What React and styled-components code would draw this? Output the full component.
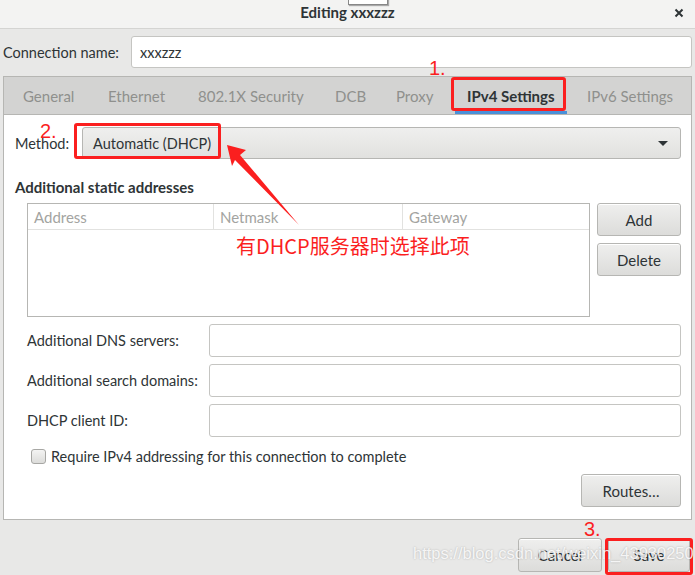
import React from "react";
import styled, { createGlobalStyle } from "styled-components";

const GlobalStyle = createGlobalStyle`
  html, body {
    margin: 0;
    padding: 0;
    background: #e8e8e7;
  }
  body {
    font-family: Lato, "Open Sans", sans-serif;
    color: #2e3436;
  }
`;

const Window = styled.div`
  position: relative;
  width: 695px;
  height: 575px;
  overflow: hidden;
  background: #e8e8e7;
  display: flex;
  flex-direction: column;
`;

const TitleBar = styled.div`
  height: 28px;
  flex: none;
  background: #f3f3f2;
  border-bottom: 1px solid #d4d4d2;
  display: flex;
  align-items: center;
  justify-content: center;
  position: relative;
`;

const Title = styled.div`
  font-size: 15px;
  font-weight: 700;
  color: #2e3436;
  margin-top: -4px;
`;

const CloseButton = styled.div`
  position: absolute;
  right: 11px;
  top: 8px;
  width: 10px;
  height: 10px;
  display: flex;
`;

const Body = styled.div`
  flex: 1;
  display: flex;
  flex-direction: column;
  padding: 7px 3px 0 3px;
`;

const NameRow = styled.div`
  display: flex;
  align-items: center;
  gap: 12px;
`;

const Label = styled.label`
  font-size: 14.5px;
  color: #2e3436;
  white-space: nowrap;
  width: ${(p) => (p.$width ? p.$width + "px" : "auto")};
  flex: none;
`;

const Entry = styled.div`
  flex: 1;
  height: 30px;
  background: #fff;
  border: 1px solid #c5c5c2;
  border-radius: 3px;
  display: flex;
  align-items: center;
  padding: 0 8px;
  font-size: 14.5px;
  color: #2e3436;
`;

const Notebook = styled.div`
  margin-top: 8px;
  display: flex;
  flex-direction: column;
`;

const TabBar = styled.div`
  height: 37px;
  background: #d3d3d2;
  border: 1px solid #b6b6b3;
  border-bottom: none;
  display: flex;
  padding-left: 19px;
`;

const Tab = styled.div`
  width: ${(p) => p.$w}px;
  flex: none;
  display: flex;
`;

const TabInner = styled.div`
  margin-left: -12px;
  padding: 3px 12px 0;
  display: flex;
  align-items: center;
  white-space: nowrap;
  font-size: 15px;
  font-weight: ${(p) => (p.$active ? 700 : 400)};
  color: ${(p) => (p.$active ? "#2e3436" : "#8f908d")};
  border-bottom: 3px solid ${(p) => (p.$active ? "#4a90d9" : "transparent")};
`;

const Page = styled.div`
  height: 406px;
  background: #fff;
  border: 1px solid #b6b6b3;
  padding: 12px 10px 0 11px;
  box-sizing: border-box;
  display: flex;
  flex-direction: column;
`;

const MethodRow = styled.div`
  display: flex;
  align-items: center;
  gap: 13px;
`;

const Combo = styled.div`
  flex: 1;
  height: 32px;
  box-sizing: border-box;
  background: linear-gradient(#efefee, #e1e1df);
  border: 1px solid #b6b6b3;
  border-radius: 3px;
  display: flex;
  align-items: center;
  justify-content: space-between;
  padding: 0 10px;
  font-size: 14.5px;
  color: #2e3436;
`;

const Caret = styled.span`
  width: 0;
  height: 0;
  border-left: 5px solid transparent;
  border-right: 5px solid transparent;
  border-top: 5px solid #2e3436;
  margin-right: 2px;
`;

const SectionTitle = styled.div`
  margin-top: 18px;
  font-size: 15px;
  font-weight: 700;
  color: #2e3436;
  height: 20px;
  line-height: 20px;
`;

const Indent = styled.div`
  padding-left: 12px;
  display: flex;
  flex-direction: column;
`;

const AddressArea = styled.div`
  margin-top: 6px;
  display: flex;
  gap: 7px;
`;

const Table = styled.div`
  width: 563px;
  height: 114px;
  box-sizing: border-box;
  border: 1px solid #b6b6b3;
  background: #fff;
`;

const TableHead = styled.div`
  display: grid;
  grid-template-columns: 185px 189px 1fr;
  height: 25px;
  border-bottom: 1px solid #e2e2e0;
`;

const HeadCell = styled.div`
  font-size: 15px;
  color: #a3a4a1;
  padding-left: 6px;
  display: flex;
  align-items: center;
  border-left: ${(p) => (p.$first ? "none" : "1px solid #e2e2e0")};
`;

const SideButtons = styled.div`
  display: flex;
  flex-direction: column;
  gap: 7px;
`;

const Button = styled.div`
  width: ${(p) => p.$w}px;
  height: ${(p) => p.$h || 33}px;
  box-sizing: border-box;
  background: linear-gradient(#efefee, #dcdcda);
  border: 1px solid #b6b6b3;
  border-radius: 3px;
  display: flex;
  align-items: center;
  justify-content: center;
  font-size: 15px;
  color: #2e3436;
  box-shadow: inset 0 1px #fff;
`;

const FieldRows = styled.div`
  margin-top: 7px;
  display: flex;
  flex-direction: column;
  gap: 7px;
`;

const FieldRow = styled.div`
  display: flex;
  align-items: center;
`;

const FieldEntry = styled.div`
  flex: 1;
  height: 33px;
  box-sizing: border-box;
  background: #fff;
  border: 1px solid #c5c5c2;
  border-radius: 3px;
`;

const CheckRow = styled.div`
  margin-top: 11px;
  display: flex;
  align-items: center;
  gap: 5px;
  padding-left: 4px;
`;

const CheckBox = styled.div`
  width: 15px;
  height: 15px;
  box-sizing: border-box;
  border: 1px solid #a7a7a4;
  border-radius: 3px;
  background: linear-gradient(#f4f4f3, #dcdcda);
`;

const RoutesRow = styled.div`
  margin-top: 9px;
  display: flex;
  justify-content: flex-end;
`;

const Footer = styled.div`
  flex: 1;
  display: flex;
  justify-content: flex-end;
  align-items: flex-start;
  gap: 6px;
  padding: 18px 2px 0 0;
`;

/* annotations drawn on top of the screenshot */

const Mark = styled.div`
  position: absolute;
  left: ${(p) => p.$x}px;
  top: ${(p) => p.$y}px;
  width: ${(p) => p.$w}px;
  height: ${(p) => p.$h}px;
  box-sizing: border-box;
  border: 3px solid #fb1f1f;
  border-radius: 3px;
  pointer-events: none;
`;

const Step = styled.div`
  position: absolute;
  left: ${(p) => p.$x}px;
  top: ${(p) => p.$y}px;
  font-family: "Liberation Sans", "DejaVu Sans", sans-serif;
  font-size: 20px;
  color: #fb1f1f;
  line-height: 1;
`;

const Note = styled.div`
  position: absolute;
  left: 236px;
  top: 234px;
  font-family: "Noto Sans CJK SC", "Noto Sans", sans-serif;
  font-size: 20px;
  color: #fb1f1f;
  line-height: 1.2;
  white-space: nowrap;
`;

const Watermark = styled.div`
  position: absolute;
  left: 413px;
  top: 544px;
  font-family: "Liberation Sans", Arial, sans-serif;
  font-size: 16.5px;
  color: rgba(255, 255, 255, 0.85);
  text-shadow: 0 0 2px rgba(0, 0, 0, 0.25);
  white-space: nowrap;
  pointer-events: none;
`;

const Overlay = styled.svg`
  position: absolute;
  left: 0;
  top: 0;
  pointer-events: none;
`;

const Popup = styled.div`
  position: absolute;
  left: 348px;
  top: -2px;
  width: 38px;
  height: 5px;
  background: #fff;
  border: 1px solid #888;
  box-shadow: 1px 1px 1px rgba(0, 0, 0, 0.3);
`;

const tabs = [
  { label: "General", w: 85 },
  { label: "Ethernet", w: 90 },
  { label: "802.1X Security", w: 137 },
  { label: "DCB", w: 61 },
  { label: "Proxy", w: 71 },
  { label: "IPv4 Settings", w: 120, active: true },
  { label: "IPv6 Settings", w: 100 },
];

const fields = ["Additional DNS servers:", "Additional search domains:", "DHCP client ID:"];

export default function App() {
  return (
    <>
      <GlobalStyle />
      <Window>
        <TitleBar>
          <Title>Editing xxxzzz</Title>
          <CloseButton>
            <svg width="10" height="10" viewBox="0 0 10 10">
              <path d="M1.5 1.5 L8.5 8.5 M8.5 1.5 L1.5 8.5" stroke="#2e3436" strokeWidth="2" />
            </svg>
          </CloseButton>
        </TitleBar>
        <Body>
          <NameRow>
            <Label>Connection name:</Label>
            <Entry>xxxzzz</Entry>
          </NameRow>
          <Notebook>
            <TabBar>
              {tabs.map((t) => (
                <Tab key={t.label} $w={t.w}>
                  <TabInner $active={t.active}>{t.label}</TabInner>
                </Tab>
              ))}
            </TabBar>
            <Page>
              <MethodRow>
                <Label>Method:</Label>
                <Combo>
                  <span>Automatic (DHCP)</span>
                  <Caret />
                </Combo>
              </MethodRow>
              <SectionTitle>Additional static addresses</SectionTitle>
              <Indent>
                <AddressArea>
                  <Table>
                    <TableHead>
                      <HeadCell $first>Address</HeadCell>
                      <HeadCell>Netmask</HeadCell>
                      <HeadCell>Gateway</HeadCell>
                    </TableHead>
                  </Table>
                  <SideButtons>
                    <Button $w={84}>Add</Button>
                    <Button $w={84}>Delete</Button>
                  </SideButtons>
                </AddressArea>
                <FieldRows>
                  {fields.map((f) => (
                    <FieldRow key={f}>
                      <Label $width={182}>{f}</Label>
                      <FieldEntry />
                    </FieldRow>
                  ))}
                </FieldRows>
                <CheckRow>
                  <CheckBox />
                  <Label>Require IPv4 addressing for this connection to complete</Label>
                </CheckRow>
                <RoutesRow>
                  <Button $w={100}>Routes…</Button>
                </RoutesRow>
              </Indent>
            </Page>
          </Notebook>
          <Footer>
            <Button $w={84} $h={34}>Cancel</Button>
            <Button $w={82} $h={34}>Save</Button>
          </Footer>
        </Body>

        <Popup />
        <Step $x={429} $y={58}>1.</Step>
        <Mark $x={451} $y={77} $w={115} $h={34} />
        <Step $x={40} $y={121}>2.</Step>
        <Mark $x={74} $y={123} $w={147} $h={36} />
        <Note>有DHCP服务器时选择此项</Note>
        <Step $x={584} $y={519}>3.</Step>
        <Mark $x={605} $y={538} $w={88} $h={37} />
        <Overlay width="695" height="575">
          <polygon
            points="227,145 246,150 240,155 299,225 235,160 232,166"
            fill="#fb1f1f"
          />
        </Overlay>
        <Watermark>https://blog.csdn.net/weixin_43930250</Watermark>
      </Window>
    </>
  );
}
